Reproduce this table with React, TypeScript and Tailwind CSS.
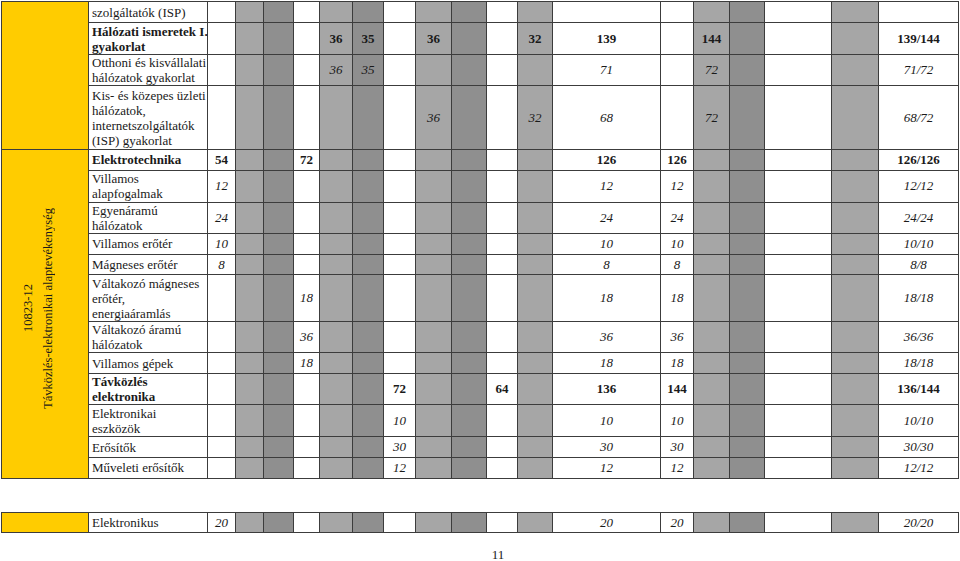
type Weight = "bold" | "italic" | "normal";

interface Row {
    label: string[];
    labelBold?: boolean;
    weight: Weight;
    height: string;
    values: Record<number, string>;
}

// shading of the 18 hour columns, left to right
const shades = ["w", "l", "d", "w", "l", "d", "w", "l", "d", "w", "l", "w", "w", "l", "d", "w", "l", "w"];

const shadeClass: Record<string, string> = {
    w: "bg-white",
    l: "bg-[#a6a6a6]",
    d: "bg-[#8f8f8f]",
};

const weightClass: Record<Weight, string> = {
    bold: "font-bold",
    italic: "italic",
    normal: "",
};

const colWidths = [119, 28, 28, 30, 26, 33, 31, 32, 36, 35, 31, 35, 108, 33, 36, 35, 67, 47, 80];

const rows: Row[] = [
    { label: ["szolgáltatók (ISP)"], weight: "normal", height: "h-[21px]", values: {} },
    {
        label: ["Hálózati ismeretek I.", "gyakorlat"], labelBold: true, weight: "bold", height: "h-[32px]",
        values: { 5: "36", 6: "35", 8: "36", 11: "32", 12: "139", 14: "144", 18: "139/144" },
    },
    {
        label: ["Otthoni és kisvállalati", "hálózatok gyakorlat"], weight: "italic", height: "h-[31px]",
        values: { 5: "36", 6: "35", 12: "71", 14: "72", 18: "71/72" },
    },
    {
        label: ["Kis- és közepes üzleti", "hálózatok,", "internetszolgáltatók", "(ISP) gyakorlat"], weight: "italic", height: "h-[64px]",
        values: { 8: "36", 11: "32", 12: "68", 14: "72", 18: "68/72" },
    },
    {
        label: ["Elektrotechnika"], labelBold: true, weight: "bold", height: "h-[20px]",
        values: { 1: "54", 4: "72", 12: "126", 13: "126", 18: "126/126" },
    },
    { label: ["Villamos", "alapfogalmak"], weight: "italic", height: "h-[32px]", values: { 1: "12", 12: "12", 13: "12", 18: "12/12" } },
    { label: ["Egyenáramú", "hálózatok"], weight: "italic", height: "h-[31px]", values: { 1: "24", 12: "24", 13: "24", 18: "24/24" } },
    { label: ["Villamos erőtér"], weight: "italic", height: "h-[21px]", values: { 1: "10", 12: "10", 13: "10", 18: "10/10" } },
    { label: ["Mágneses erőtér"], weight: "italic", height: "h-[20px]", values: { 1: "8", 12: "8", 13: "8", 18: "8/8" } },
    {
        label: ["Váltakozó mágneses", "erőtér,", "energiaáramlás"], weight: "italic", height: "h-[47px]",
        values: { 4: "18", 12: "18", 13: "18", 18: "18/18" },
    },
    { label: ["Váltakozó áramú", "hálózatok"], weight: "italic", height: "h-[30px]", values: { 4: "36", 12: "36", 13: "36", 18: "36/36" } },
    { label: ["Villamos gépek"], weight: "italic", height: "h-[21px]", values: { 4: "18", 12: "18", 13: "18", 18: "18/18" } },
    {
        label: ["Távközlés", "elektronika"], labelBold: true, weight: "bold", height: "h-[30px]",
        values: { 7: "72", 10: "64", 12: "136", 13: "144", 18: "136/144" },
    },
    { label: ["Elektronikai", "eszközök"], weight: "italic", height: "h-[32px]", values: { 7: "10", 12: "10", 13: "10", 18: "10/10" } },
    { label: ["Erősítők"], weight: "italic", height: "h-[21px]", values: { 7: "30", 12: "30", 13: "30", 18: "30/30" } },
    { label: ["Műveleti erősítők"], weight: "italic", height: "h-[20px]", values: { 7: "12", 12: "12", 13: "12", 18: "12/12" } },
];

const cellBorder = "border border-[#3c3c3c]";

const Cells = ({ row }: { row: Row }) => (
    <>
        <td className={`${cellBorder} px-[3px] py-0 align-middle leading-[15px] ${row.labelBold ? "font-bold" : ""}`}>
            {row.label.map((line) => (
                <div key={line} className="whitespace-nowrap">{line}</div>
            ))}
        </td>
        {shades.map((s, i) => (
            <td
                key={i}
                className={`${cellBorder} ${shadeClass[s]} ${weightClass[row.weight]} p-0 text-center align-middle whitespace-nowrap`}
            >
                {row.values[i + 1] ?? ""}
            </td>
        ))}
    </>
);

const ColGroup = () => (
    <colgroup>
        <col style={{ width: 87 }} />
        {colWidths.map((w, i) => (
            <col key={i} style={{ width: w }} />
        ))}
    </colgroup>
);

export default function App() {
    return (
        <div className="w-[960px] h-[561px] bg-white text-[#1a1a1a] text-[13px] font-['Liberation_Serif','DejaVu_Serif',serif] overflow-hidden">
            <table className="table-fixed border-collapse w-[957px] ml-[1px] mt-[1px]">
                <ColGroup />
                <tbody>
                    {rows.map((row, idx) => (
                        <tr key={idx} className={row.height}>
                            {idx === 0 && (
                                <td rowSpan={4} className={`${cellBorder} bg-[#ffcc00]`} />
                            )}
                            {idx === 4 && (
                                <td rowSpan={12} className={`${cellBorder} bg-[#ffcc00] p-0 align-middle`}>
                                    <div className="flex justify-center pr-[14px] pb-[10px]">
                                        <div className="[writing-mode:vertical-rl] rotate-180 text-center text-[12.5px] leading-[20px] whitespace-nowrap">
                                            <div>10823-12</div>
                                            <div>Távközlés-elektronikai alaptevékenység</div>
                                        </div>
                                    </div>
                                </td>
                            )}
                            <Cells row={row} />
                        </tr>
                    ))}
                </tbody>
            </table>

            {/* separate module row */}
            <table className="table-fixed border-collapse w-[957px] ml-[1px] mt-[33px]">
                <ColGroup />
                <tbody>
                    <tr className="h-[20px]">
                        <td className={`${cellBorder} bg-[#ffcc00]`} />
                        <Cells row={{ label: ["Elektronikus"], weight: "italic", height: "", values: { 1: "20", 12: "20", 13: "20", 18: "20/20" } }} />
                    </tr>
                </tbody>
            </table>

            <div className="mt-[16px] text-center leading-[12px] w-[996px]">11</div>
        </div>
    );
}
